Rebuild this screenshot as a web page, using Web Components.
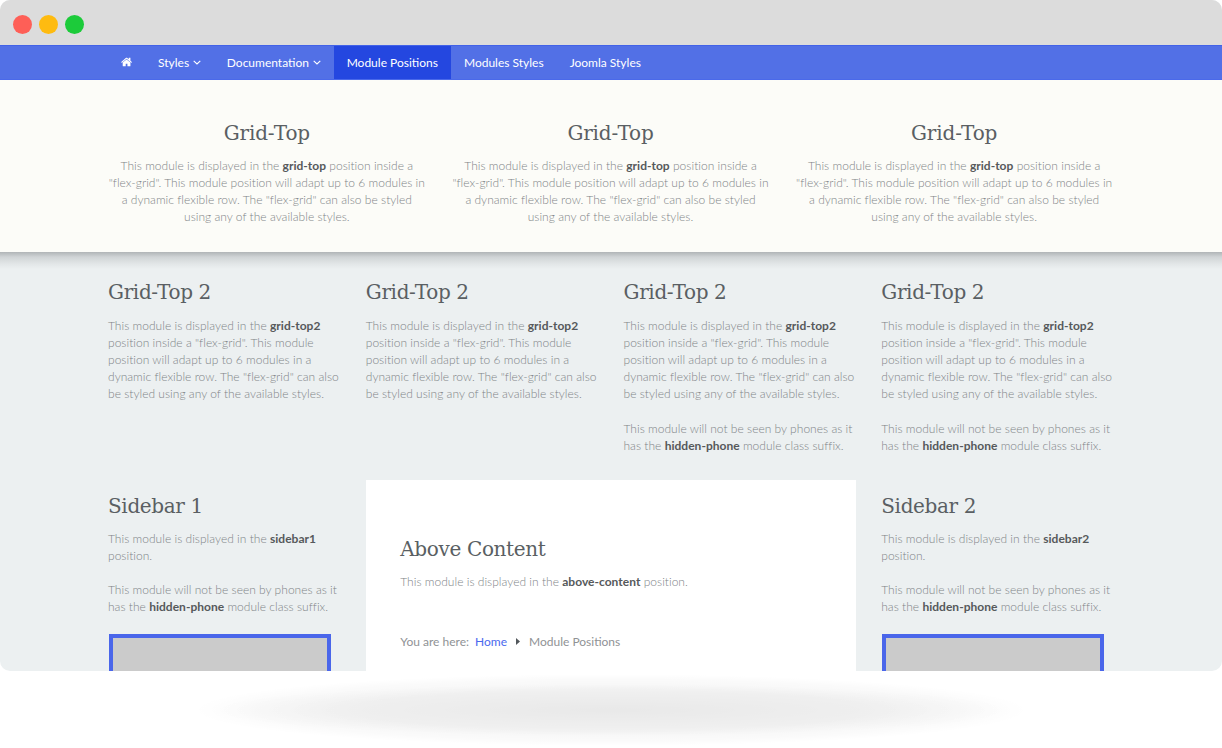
<!DOCTYPE html>
<html lang="en">
<head>
<meta charset="utf-8">
<title>Module Positions</title>
<style>
html, body { margin: 0; padding: 0; background: #fff; }
body { font-family: "Lato", "Liberation Sans", sans-serif; }
</style>
</head>
<body>
<site-app></site-app>
<script>
customElements.define("nav-item", class extends HTMLElement {
    connectedCallback() {
        const caret = this.hasAttribute("caret") ? `<svg class="caret" width="8" height="5" viewBox="0 0 8 5"><path d="M.7.8 4 4 7.3.8" fill="none" stroke="currentColor" stroke-width="1.1"/></svg>` : "";
        this.attachShadow({mode: "open"}).innerHTML = `
<style>
:host {
    display: flex;
    align-items: center;
    gap: 3.7px;
    padding: 0 13px 1px;
    color: #fff;
    font-size: 12px;
    white-space: nowrap;
}
:host([active]) {
    background: #2447e0;
}
.caret { margin-top: 1px; }
</style>
<slot></slot>${caret}
`
    }
});

customElements.define("nav-bar", class extends HTMLElement {
    connectedCallback() {
        this.attachShadow({mode: "open"}).innerHTML = `
<style>
:host {
    display: flex;
    height: 33px;
    padding: 0 96px 0 108px;
    background: #5270e6;
    border-top: 1px solid #4262e8;
    border-bottom: 1px solid #4a69ea;
}
svg { display: block; margin-right: -1px; }
</style>
<nav-item><svg width="12" height="12" viewBox="0 0 1792 1792" fill="#fff"><path d="M1408 992v480q0 26-19 45t-45 19h-384v-384h-256v384h-384q-26 0-45-19t-19-45v-480q0-1 .5-3t.5-3l575-474 575 474q1 2 1 6zm223-69l-62 74q-8 9-21 11h-3q-13 0-21-7l-692-577-692 577q-12 8-24 7-13-2-21-11l-62-74q-8-10-7-23.5t11-21.5l719-599q32-26 76-26t76 26l244 204v-195q0-14 9-23t23-9h192q14 0 23 9t9 23v408l219 182q10 8 11 21.5t-7 23.5z"/></svg></nav-item>
<nav-item caret>Styles</nav-item>
<nav-item caret>Documentation</nav-item>
<nav-item active>Module Positions</nav-item>
<nav-item>Modules Styles</nav-item>
<nav-item>Joomla Styles</nav-item>
`
    }
});

customElements.define("window-bar", class extends HTMLElement {
    connectedCallback() {
        this.attachShadow({mode: "open"}).innerHTML = `
<style>
:host {
    display: flex;
    align-items: center;
    gap: 7px;
    height: 45px;
    padding: 0 13px;
    box-sizing: border-box;
    background: #dcdcdc;
}
i {
    width: 19px;
    height: 19px;
    border-radius: 50%;
    margin-top: 3px;
}
</style>
<i style="background:#fe5f57"></i><i style="background:#febb10"></i><i style="background:#1ccb3a"></i>
`
    }
});

customElements.define("mod-text", class extends HTMLElement {
    connectedCallback() {
        this.attachShadow({mode: "open"}).innerHTML = `
<style>
:host {
    display: block;
    margin: 0 0 var(--para-gap, 17px);
    font-size: 12px;
    line-height: 17px;
    font-weight: 300;
    letter-spacing: .02px;
    color: #808487;
}
:host(:last-child) { margin-bottom: 0; }
::slotted(b) {
    font-weight: 700;
    color: #56595b;
}
</style>
<slot></slot>
`
    }
});

customElements.define("mod-card", class extends HTMLElement {
    connectedCallback() {
        this.attachShadow({mode: "open"}).innerHTML = `
<style>
:host {
    display: block;
    min-width: 0;
}
h3 {
    margin: 0 0 var(--heading-gap, 12px);
    font-family: "DejaVu Serif", "Liberation Serif", serif;
    font-size: 20px;
    line-height: 26px;
    font-weight: 400;
    letter-spacing: var(--heading-track, -.35px);
    color: #5a5f63;
}
</style>
<h3>${this.getAttribute("heading")}</h3>
<slot></slot>
`
    }
});

customElements.define("side-banner", class extends HTMLElement {
    connectedCallback() {
        this.attachShadow({mode: "open"}).innerHTML = `
<style>
:host {
    display: block;
    width: 222px;
    height: 120px;
    margin: 19px 0 0 1px;
    box-sizing: border-box;
    background: #cbcbcb;
    border: 4px solid #4a66ea;
}
</style>
`
    }
});

customElements.define("bread-crumb", class extends HTMLElement {
    connectedCallback() {
        this.attachShadow({mode: "open"}).innerHTML = `
<style>
:host {
    display: flex;
    align-items: center;
    margin-top: 43px;
    font-size: 12px;
    line-height: 17px;
    color: #8f9295;
    font-weight: 400;
}
a { color: #4a69ee; text-decoration: none; margin-left: 6px; }
svg { margin: 0 8.5px 0 9.5px; }
</style>
<span>You are here:</span>
<a href="#">Home</a>
<svg width="4" height="7" viewBox="0 0 4 7"><path d="M0 0 4 3.5 0 7z" fill="#52575b"/></svg>
<span>Module Positions</span>
`
    }
});

const gridTopText = `<mod-text>This module is displayed in the <b>grid-top</b> position inside a "flex-grid". This module position will adapt up to 6 modules in a dynamic flexible row. The "flex-grid" can also be styled using any of the available styles.</mod-text>`;
const gridTop2Text = `<mod-text>This module is displayed in the <b>grid-top2</b> position inside a "flex-grid". This module position will adapt up to 6 modules in a dynamic flexible row. The "flex-grid" can also be styled using any of the available styles.</mod-text>`;
const hiddenText = `<mod-text>This module will not be seen by phones as it has the <b>hidden-phone</b> module class suffix.</mod-text>`;

customElements.define("site-app", class extends HTMLElement {
    connectedCallback() {
        const top = `<mod-card heading="Grid-Top">${gridTopText}</mod-card>`;
        const top2 = `<mod-card heading="Grid-Top 2">${gridTop2Text}</mod-card>`;
        const top2Hidden = `<mod-card heading="Grid-Top 2">${gridTop2Text}${hiddenText}</mod-card>`;
        const sidebar = n => `<mod-card heading="Sidebar ${n}"><mod-text>This module is displayed in the <b>sidebar${n}</b> position.</mod-text>${hiddenText}<side-banner></side-banner></mod-card>`;
        this.attachShadow({mode: "open"}).innerHTML = `
<style>
:host {
    display: block;
    width: 1222px;
    height: 748px;
    overflow: hidden;
}
.frame {
    height: 671px;
    overflow: hidden;
    border-radius: 10px;
    background: #ecf0f1;
}
.hero {
    position: relative;
    height: 172px;
    box-sizing: border-box;
    padding: 40px 0 0;
    background: #fcfcf8;
    text-align: center;
    --heading-gap: 11px;
    --heading-track: -.15px;
}
.hero::after {
    content: "";
    position: absolute;
    left: 0;
    right: 0;
    top: 100%;
    height: 17px;
    background: linear-gradient(rgba(70, 75, 80, .36), rgba(70, 75, 80, .17) 30%, rgba(70, 75, 80, .06) 70%, rgba(70, 75, 80, 0));
}
.row {
    display: grid;
    width: 1031px;
    margin: 0 95px 0 96px;
}
.row > * { padding: 0 12px; }
.three { grid-template-columns: repeat(3, 1fr); margin: 0 96px 0 95px; }
.four { grid-template-columns: repeat(4, 1fr); padding-top: 27px; --para-gap: 18px; }
.main { grid-template-columns: 1fr 2fr 1fr; padding-top: 26px; }
.content {
    padding: 56px 34.5px 0 !important;
    margin: 0 13px 0 12px;
    background: #fff;
    height: 300px;
    --heading-gap: 11px;
}
.side { padding-top: 13px !important; --heading-gap: 11px; }
.ground {
    width: 840px;
    height: 72px;
    margin: 3px auto 0;
    background:
        radial-gradient(ellipse 400px 26px at center, rgba(0,0,0,.055), rgba(0,0,0,.028) 70%, rgba(0,0,0,0)),
        radial-gradient(ellipse 418px 36px at center, rgba(0,0,0,.035) 60%, rgba(0,0,0,.018) 85%, rgba(0,0,0,0));
}
</style>
<div class="frame">
    <window-bar></window-bar>
    <nav-bar></nav-bar>
    <section class="hero"><div class="row three">${top}${top}${top}</div></section>
    <section class="row four">${top2}${top2}${top2Hidden}${top2Hidden}</section>
    <section class="row main">
        <div class="side">${sidebar(1)}</div>
        <div class="content">
            <mod-card heading="Above Content"><mod-text>This module is displayed in the <b>above-content</b> position.</mod-text></mod-card>
            <bread-crumb></bread-crumb>
        </div>
        <div class="side">${sidebar(2)}</div>
    </section>
</div>
<div class="ground"></div>
`
    }
});
</script>
</body>
</html>
